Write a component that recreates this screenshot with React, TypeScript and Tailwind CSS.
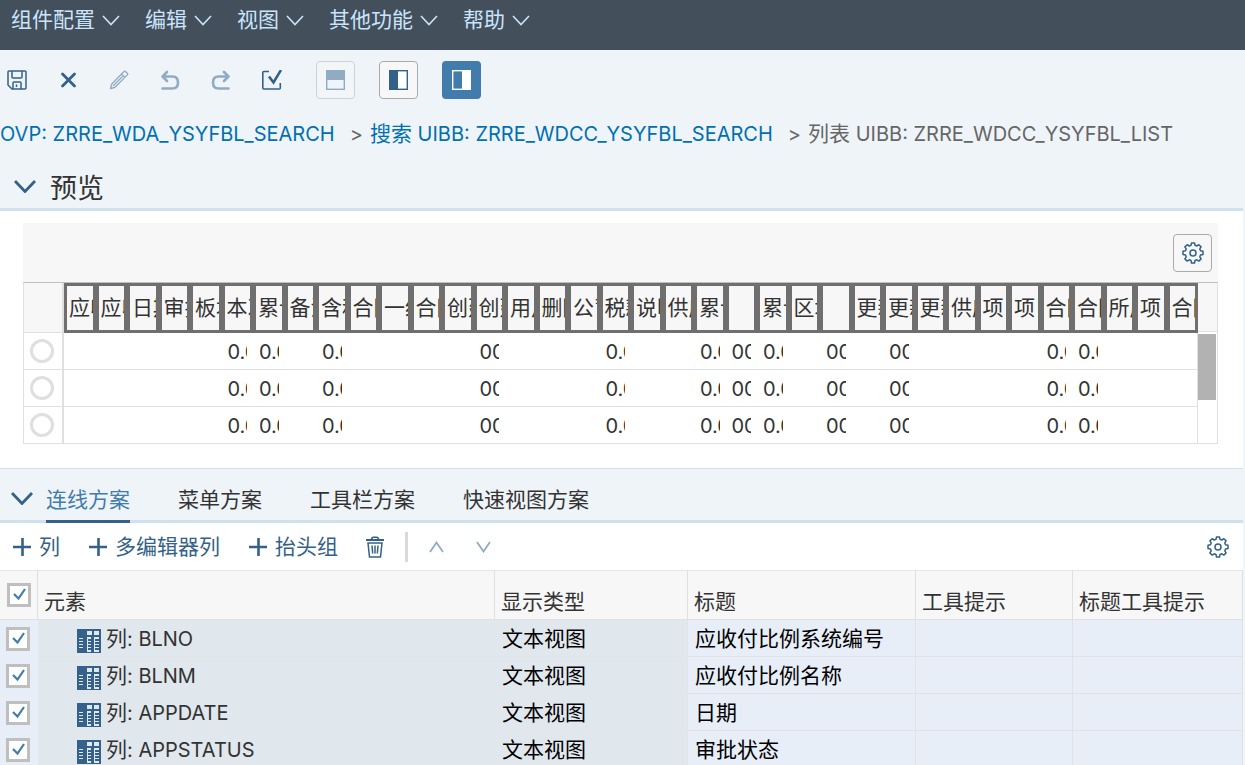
import React, { useState } from 'react';

const FONT = "font-[Inter,'Noto_Sans_CJK_SC',sans-serif]";

const menus = ['组件配置', '编辑', '视图', '其他功能', '帮助'];

const tabs = ['连线方案', '菜单方案', '工具栏方案', '快速视图方案'];

const previewColumns = [
  '应收', '应收', '日期', '审批', '板块', '本次', '累计', '备注', '含税',
  '合同', '一级', '合同', '创建', '创建', '用户', '删除', '公司', '税款',
  '说明', '供应', '累计', '', '累计', '区域', '', '更新', '更新',
  '更新', '供应', '项目', '项目', '合同', '合同', '所属', '项目', '合同',
];

// column index -> initial value of the preview rows
const previewValues: Record<number, string> = {
  5: '0.00', 6: '0.00', 8: '0.00', 13: '00:00', 17: '0.00', 20: '0.00',
  21: '00:00', 22: '0.00', 24: '00:00', 26: '00:00', 31: '0.00', 32: '0.00',
};

const elements = [
  { name: 'BLNO', title: '应收付比例系统编号' },
  { name: 'BLNM', title: '应收付比例名称' },
  { name: 'APPDATE', title: '日期' },
  { name: 'APPSTATUS', title: '审批状态' },
];

const svgProps = {
  fill: 'none',
  stroke: 'currentColor',
  'aria-hidden': true,
} as const;

const SaveIcon = () => (
  <svg {...svgProps} width="20" height="20" viewBox="0 0 20 20" strokeWidth="1.5">
    <path d="M2 1h16q1 0 1 1v16q0 1-1 1H5l-4-4V2q0-1 1-1z" />
    <path d="M5 1v6q0 1 1 1h8q1 0 1-1V1M6 19v-6q0-1 1-1h6q1 0 1 1v6M9.500 14.500v2.500" />
  </svg>
);

const CloseIcon = () => (
  <svg {...svgProps} width="20" height="20" viewBox="0 0 20 20" strokeWidth="2.8" strokeLinecap="round">
    <path d="M4.500 4l12 12M16.500 4l-12 12" />
  </svg>
);

const PencilIcon = () => (
  <svg {...svgProps} width="20" height="20" viewBox="0 0 20 20" strokeWidth="1.3" strokeLinejoin="round">
    <path d="M1.500 18.500l1.200-4.500L15 1.500q.7-.6 1.400 0l2 2q.7.7 0 1.400L6 17.300zM12.500 4l3.500 3.500M14 6L4 16" />
  </svg>
);

const UndoIcon = () => (
  <svg {...svgProps} width="20" height="20" viewBox="0 0 20 20" strokeWidth="2.6" strokeLinecap="round" strokeLinejoin="round">
    <path d="M7 2L2.500 6.500 7 11M3 6.500h9.500q5.500 0 5.500 6t-5.500 6H2.500" />
  </svg>
);

const RedoIcon = () => (
  <svg {...svgProps} width="20" height="20" viewBox="0 0 20 20" strokeWidth="2.6" strokeLinecap="round" strokeLinejoin="round">
    <path d="M13 2l4.500 4.500L13 11M17 6.500H7.500q-5.500 0-5.500 6t5.500 6h10" />
  </svg>
);

const CheckFrameIcon = () => (
  <svg {...svgProps} width="20" height="20" viewBox="0 0 20 20" strokeWidth="1.6">
    <path d="M7 1.500H1.800q-1 0-1 1v15.500q0 1 1 1h15.500q1 0 1-1v-5" />
    <path d="M7 6.500l4.500 6L19 0" strokeWidth="2.6" />
  </svg>
);

const Chevron: React.FC<{ width: number; height: number; stroke: number; up?: boolean }> = ({ width, height, stroke, up }) => (
  <svg {...svgProps} width={width} height={height} viewBox={`0 0 ${width} ${height}`} strokeWidth={stroke}>
    <path
      d={up
        ? `M1 ${height - 1}L${width / 2} 1.5L${width - 1} ${height - 1}`
        : `M1 1L${width / 2} ${height - 1.5}L${width - 1} 1`}
    />
  </svg>
);

const PlusIcon = () => (
  <svg {...svgProps} width="20" height="20" viewBox="0 0 20 20" strokeWidth="2.6">
    <path d="M10.500 1v18M1 10h18" />
  </svg>
);

const TrashIcon = () => (
  <svg {...svgProps} width="18" height="22" viewBox="0 0 18 22" strokeWidth="1.5">
    <path d="M0 4h18" strokeWidth="2" />
    <path d="M5.500 3.500q0-2.300 2-2.300h3q2 0 2 2.300M2 7l1.500 14h11L16 7zM6 9.500l.7 8M9 9.500v8M12 9.500l-.7 8" />
  </svg>
);

const GearIcon = () => (
  <svg {...svgProps} width="22" height="22" viewBox="0 0 22 22" strokeWidth="1.5" strokeLinejoin="round">
    <path d="M9.500 1h3l.5 2.300 1.800.7 2-1.300 2.300 2.200-1.300 2 .7 1.800 2.500.6v3.200l-2.500.6-.7 1.800 1.300 2-2.300 2.200-2-1.300-1.800.7-.5 2.500h-3L9 18.500l-1.800-.7-2 1.300-2.300-2.200 1.300-2-.7-1.800L1 12.500V9.300l2.500-.6.7-1.800-1.300-2 2.300-2.200 2 1.300L9 3.300z" />
    <circle cx="11" cy="11" r="3" />
  </svg>
);

const ColumnIcon = () => (
  <svg width="24" height="24" viewBox="0 0 24 24" aria-hidden="true">
    <path fill="#35628a" d="M0 0h24v24H0z" />
    <path fill="#e0e7ed" d="M10 2h5v4h-5zM17 2h5v4h-5zM10 8h4v15h-4zM17 8h5v15h-5zM2 9h4v1H2zM2 12h4v1H2zM2 15h4v1H2zM2 18h4v1H2z" />
    <path fill="#35628a" d="M11 10h3v2h-3zM11 13h3v2h-3zM11 16h3v2h-3zM11 19h3v2h-3zM18 10h4v2h-4zM18 13h4v2h-4zM18 16h4v2h-4zM18 19h4v2h-4z" />
  </svg>
);

const PaneIcon: React.FC<{ kind: 'top' | 'left' | 'right' }> = ({ kind }) => {
  if (kind === 'top') {
    return (
      <svg width="19" height="20" viewBox="0 0 19 20" aria-hidden="true">
        <rect x=".7" y=".7" width="17.6" height="18.6" fill="#eff4f9" stroke="#91abc2" strokeWidth="1.4" />
        <path fill="#91abc2" d="M0 0h19v10H0z" />
      </svg>
    );
  }
  if (kind === 'left') {
    return (
      <svg width="19" height="20" viewBox="0 0 19 20" aria-hidden="true">
        <rect x=".7" y=".7" width="17.6" height="18.6" fill="#fff" stroke="#346187" strokeWidth="1.4" />
        <path fill="#346187" d="M0 0h9v20H0z" />
      </svg>
    );
  }
  return (
    <svg width="19" height="20" viewBox="0 0 19 20" aria-hidden="true">
      <rect x=".7" y=".7" width="17.6" height="18.6" fill="none" stroke="#fff" strokeWidth="1.4" />
      <path fill="#fff" d="M10 0h9v20h-9z" />
    </svg>
  );
};

const CheckBox: React.FC<{ label: string; checked: boolean; onChange: () => void }> = ({ label, checked, onChange }) => (
  <label className="relative block size-6">
    <input
      type="checkbox"
      aria-label={label}
      checked={checked}
      onChange={onChange}
      className="block size-6 appearance-none border-3 border-[#bfbfbf] bg-white"
    />
    {checked && (
      <svg {...svgProps} className="absolute inset-0 text-[#427cac]" width="24" height="24" viewBox="0 0 24 24" strokeWidth="2.2">
        <path d="M7 11l4.500 4.500L18 6" />
      </svg>
    )}
  </label>
);

const App: React.FC = () => {
  const [activeTab, setActiveTab] = useState(0);
  const [selectedRow, setSelectedRow] = useState<number | null>(null);
  const [checked, setChecked] = useState<boolean[]>(elements.map(() => true));

  const allChecked = checked.every(Boolean);

  return (
    <div className={`flex h-screen flex-col overflow-hidden bg-[#eff4f9] text-[21px] leading-6 text-[#333] ${FONT}`}>

      {/* Menu bar */}
      <nav className="flex h-[50px] shrink-0 items-start gap-[25px] bg-[#434f5b] pt-2 pl-[11px] text-[#cae4fb]">
        {menus.map((menu) => (
          <button key={menu} className="flex items-center gap-[7px] whitespace-nowrap">
            {menu}
            <Chevron width={18} height={11} stroke={1.6} />
          </button>
        ))}
      </nav>

      {/* Toolbar */}
      <div className="flex h-[60px] shrink-0 items-center gap-6 pl-[7px] text-[#346187]">
        <div className="flex items-center gap-[31px] pr-2.5">
          <button aria-label="保存"><SaveIcon /></button>
          <button aria-label="关闭"><CloseIcon /></button>
          <button aria-label="编辑" disabled className="text-[#91abc2]"><PencilIcon /></button>
          <button aria-label="撤消" disabled className="text-[#91abc2]"><UndoIcon /></button>
          <button aria-label="重做" disabled className="text-[#91abc2]"><RedoIcon /></button>
          <button aria-label="检查"><CheckFrameIcon /></button>
        </div>
        <button aria-label="顶部面板" disabled className="flex h-[38px] w-[39px] items-center justify-center rounded border border-[#cfd2d5] bg-[#f3f6f9]">
          <PaneIcon kind="top" />
        </button>
        <button aria-label="左侧面板" className="flex h-[38px] w-[39px] items-center justify-center rounded border border-[#ababab] bg-[#f7f7f7]">
          <PaneIcon kind="left" />
        </button>
        <button aria-label="右侧面板" className="flex h-[38px] w-[39px] items-center justify-center rounded bg-[#427cac]">
          <PaneIcon kind="right" />
        </button>
      </div>

      {/* Breadcrumb */}
      <div className="flex h-12 shrink-0 items-center gap-[7px] text-xl whitespace-nowrap text-[#666]">
        <a href="#ovp" className="text-[#0070b1]">OVP: ZRRE_WDA_YSYFBL_SEARCH</a>
        <span className="pl-2">&gt;</span>
        <a href="#search" className="text-[#0070b1]"><span className="text-[21px]">搜索</span> UIBB: ZRRE_WDCC_YSYFBL_SEARCH</a>
        <span className="pl-2">&gt;</span>
        <span><span className="text-[21px]">列表</span> UIBB: ZRRE_WDCC_YSYFBL_LIST</span>
      </div>

      {/* Preview */}
      <section className="mr-0.5 shrink-0 bg-white pb-6">
        <header className="flex h-[53px] items-end gap-3.5 border-b-3 border-[#cfe0ef] bg-[#eff4f9] pb-[3px] pl-3.5">
          <button aria-label="折叠预览" className="flex h-[38px] items-center text-[#346187]"><Chevron width={22} height={13} stroke={2.8} /></button>
          <h2 className="text-[27px] leading-8">预览</h2>
        </header>

        <div className="mt-3 mr-[25px] ml-[23px]">
          <div className="flex h-[59px] items-center justify-end bg-[#f7f7f7] pt-px pr-1.5">
            <button aria-label="设置" className="flex h-[38px] w-[39px] items-center justify-center rounded border border-[#ababab] text-[#346187]">
              <GearIcon />
            </button>
          </div>

          <div className="flex border border-t-[#bfbfbf] border-[#e0e0e0]">
            <div className="min-w-0 flex-1">
              <table className="w-full table-fixed border-separate border-spacing-0">
                <thead>
                  <tr className="h-[50px] bg-[#f7f7f7]">
                    <th className="w-10 border-r-2 border-b border-[#e0e0e0]" />
                    {previewColumns.map((column, i) => (
                      <th key={i} className="border-3 border-[#6f6f6f] p-0 pl-0.5 text-left font-normal">
                        <div className="overflow-hidden whitespace-nowrap">{column}</div>
                      </th>
                    ))}
                  </tr>
                </thead>
                <tbody>
                  {[0, 1, 2].map((row) => (
                    <tr key={row} className="group h-[37px] last:h-9">
                      <td className="border-r-2 border-b border-[#e0e0e0] p-0 pr-0.5 group-last:border-b-0">
                        <input
                          type="radio"
                          name="preview-row"
                          aria-label={`行 ${row + 1}`}
                          checked={selectedRow === row}
                          onChange={() => setSelectedRow(row)}
                          className="mx-auto block size-6 appearance-none rounded-full border-3 border-[#dfdfdf] checked:border-8"
                        />
                      </td>
                      {previewColumns.map((_, i) => (
                        <td key={i} className="border-b border-[#e0e0e0] px-1.5 pt-0.5 pb-0 text-xl leading-6 group-last:border-b-0 last:border-r">
                          <div className="overflow-hidden whitespace-nowrap">{previewValues[i]}</div>
                        </td>
                      ))}
                    </tr>
                  ))}
                </tbody>
              </table>
            </div>
            <div className="flex w-[19px] flex-col">
              <div className="h-[49px] border-b border-[#e0e0e0] bg-[#f7f7f7]" />
              <div className="mt-0.5 mr-px h-[66px] bg-[#b2b2b2]" />
            </div>
          </div>
        </div>
      </section>

      {/* Schema editor */}
      <section className="mr-0.5 bg-white">
        <header className="flex h-[55px] border-t border-b-3 border-[#cfe0ef] bg-[#eff4f9] pl-[11px]">
          <button aria-label="折叠方案" className="mt-2 mr-[13px] text-[#346187]"><Chevron width={22} height={13} stroke={2.8} /></button>
          <div role="tablist" className="flex gap-12">
            {tabs.map((tab, i) => (
              <button
                key={tab}
                role="tab"
                aria-selected={i === activeTab}
                onClick={() => setActiveTab(i)}
                className={`-mb-[3px] border-b-3 pt-2.5 whitespace-nowrap ${i === activeTab ? 'border-[#346187] text-[#427cac]' : 'border-transparent'}`}
              >
                {tab}
              </button>
            ))}
          </div>
        </header>

        <div className="flex h-[47px] items-center pr-3.5 pl-3 text-[#346187]">
          <button className="mr-7 flex items-center gap-[7px] whitespace-nowrap"><PlusIcon />列</button>
          <button className="mr-7 flex items-center gap-[7px] whitespace-nowrap"><PlusIcon />多编辑器列</button>
          <button className="mr-7 flex items-center gap-[7px] whitespace-nowrap"><PlusIcon />抬头组</button>
          <button aria-label="删除"><TrashIcon /></button>
          <div className="mx-[21px] h-[30px] w-[3px] bg-[#d9d9d9]" />
          <button aria-label="上移" disabled className="mr-8 text-[#91abc2]"><Chevron width={15} height={12} stroke={1.8} up /></button>
          <button aria-label="下移" disabled className="text-[#91abc2]"><Chevron width={15} height={12} stroke={1.8} /></button>
          <button aria-label="设置" className="ml-auto"><GearIcon /></button>
        </div>

        <table className="w-full table-fixed border-separate border-spacing-0 border-t border-[#e5e5e5]">
          <colgroup>
            <col className="w-[38px]" />
            <col />
            <col className="w-[193px]" />
            <col className="w-[228px]" />
            <col className="w-[157px]" />
            <col className="w-[170px]" />
          </colgroup>
          <thead>
            <tr className="h-[49px] bg-[#f7f7f7] text-left">
              <th className="border-r border-b border-[#e0e0e0] p-0 pl-[7px]">
                <CheckBox label="全选" checked={allChecked} onChange={() => setChecked(checked.map(() => !allChecked))} />
              </th>
              {['元素', '显示类型', '标题', '工具提示', '标题工具提示'].map((head) => (
                <th key={head} className="border-r border-b border-[#e0e0e0] px-1.5 pt-3.5 pb-0 font-normal">{head}</th>
              ))}
            </tr>
          </thead>
          <tbody>
            {elements.map((element, i) => (
              <tr key={element.name} className="h-[37px] bg-[#e7eef7]">
                <td className="p-0 pl-1.5">
                  <CheckBox
                    label={element.name}
                    checked={checked[i]}
                    onChange={() => setChecked(checked.map((value, n) => (n === i ? !value : value)))}
                  />
                </td>
                <td className="border-b border-[#e2e5e8] bg-[#e0e7ed] pt-0.5 pr-0 pb-0 pl-[39px]">
                  <div className="flex items-center gap-[5px]">
                    <div className="pt-1"><ColumnIcon /></div>
                    <span>列<span className="text-xl leading-6">: {element.name}</span></span>
                  </div>
                </td>
                <td className="border-r border-b border-[#e2e5e8] bg-[#e0e7ed] pt-0.5 pr-0 pb-0 pl-[7px] text-black">文本视图</td>
                <td className="border-r border-b border-[#e2e2e2] pt-0.5 pr-0 pb-0 pl-[7px] text-black">{element.title}</td>
                <td className="border-r border-b border-[#e2e2e2] p-0" />
                <td className="border-r border-b border-[#e2e2e2] p-0" />
              </tr>
            ))}
          </tbody>
        </table>
      </section>

    </div>
  );
};

export default App;
